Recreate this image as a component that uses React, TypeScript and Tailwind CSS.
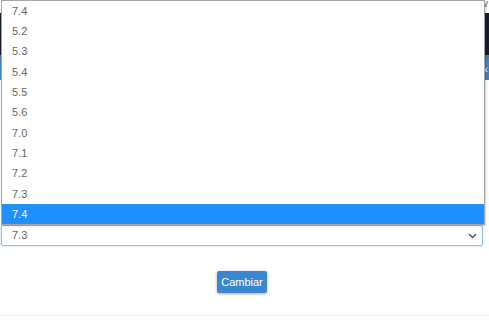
import { useState } from 'react';

const versions = ['7.4', '5.2', '5.3', '5.4', '5.5', '5.6', '7.0', '7.1', '7.2', '7.3', '7.4'];

const Chevron = () => (
    <svg width="9" height="6" viewBox="0 0 9 6" className="text-zinc-600">
        <path d="M1 1l3.5 3.5L8 1" fill="none" stroke="currentColor" strokeWidth="1.5" />
    </svg>
);

export default function App() {
    const [value] = useState('7.3');

    return (
        <div className="relative w-[489px] h-[324px] bg-white overflow-hidden font-['Liberation_Sans',Arial,sans-serif]">
            {/* page behind the open list */}
            <div className="h-[13px] flex justify-end pr-[1px] text-[9px] leading-[9px] text-zinc-500">W</div>
            <div className="h-[42px] bg-[#161c2b]" />
            <div className="h-[3px] bg-[#6b6f78]" />
            <div className="h-[22px] bg-[#3a86cc] flex items-center justify-end pr-[1px] text-white text-[11px]">‹</div>

            <div className="pt-[145px] px-[1px] w-[484px]">
                <div className="h-[21px] rounded-[2px] border border-[#8dbdf0] shadow-[0_0_2px_rgba(102,175,233,0.5)] flex items-center justify-between pl-[10px] pr-[5px] text-[11px] text-[#666]">
                    <span>{value}</span>
                    <Chevron />
                </div>
            </div>

            <div className="flex justify-center pt-[25px]">
                <button className="ml-[-5px] w-[50px] h-[22px] rounded-[2px] bg-[#3a87d0] text-white text-[11px] shadow-[0_1px_3px_rgba(0,0,0,0.35)]">
                    Cambiar
                </button>
            </div>

            <div className="mt-[22px] h-px bg-[#ececec]" />

            {/* open dropdown list */}
            <ul className="absolute top-0 left-[1px] w-[484px] h-[225px] bg-white border border-[#a4a4a4] shadow-[1px_1px_2px_rgba(0,0,0,0.2)] text-[11px]">
                {versions.map((v, i) => {
                    const active = i === versions.length - 1;
                    return (
                        <li
                            key={i}
                            className={`h-[20.3px] flex items-center pl-[10px] ${active ? 'bg-[#1e90ff] text-white' : 'text-[#666]'}`}
                        >
                            {v}
                        </li>
                    );
                })}
            </ul>
        </div>
    );
}
